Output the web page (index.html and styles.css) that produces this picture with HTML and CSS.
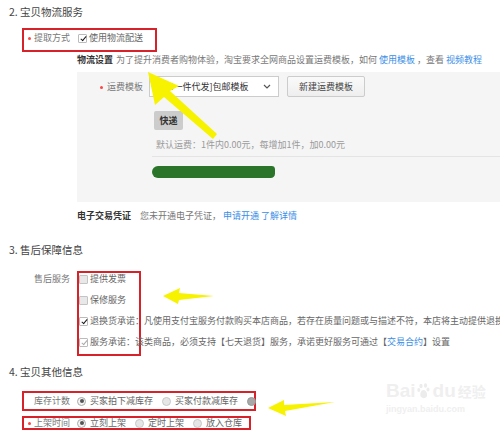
FILE: index.html
```html
<!DOCTYPE html>
<html lang="zh-CN">
    <head>
        <meta charset="utf-8">
        <meta name="viewport" content="width=device-width, initial-scale=1">
        <title>宝贝信息</title>
        <link rel="stylesheet" href="styles.css">
    </head>
    <body>
        <div class="page">
            <h2 class="sec-title">2. 宝贝物流服务</h2>
            <div class="field mark pick">
                <span class="field-label"><i class="req"></i>提取方式</span>
                <span class="opt"><span class="cb on"></span>使用物流配送</span>
            </div>
            <div class="logistics">
                <p class="tip"><b class="tip-title">物流设置</b>为了提升消费者购物体验，淘宝要求全网商品设置运费模板，如何 <a>使用模板</a> ，查看 <a>视频教程</a></p>
                <div class="panel">
                    <div class="tpl-row">
                        <span class="tpl-label"><i class="req"></i>运费模板</span>
                        <span class="select">[¥9.8一件代发]包邮模板
                            <svg class="chev" width="8" height="5" viewBox="0 0 8 5"><path d="M1 1 L4 4 L7 1" fill="none" stroke="#555" stroke-width="1.2"/></svg>
                        </span>
                        <span class="btn">新建运费模板</span>
                    </div>
                    <div class="tpl-detail">
                        <span class="tag">快递</span>
                        <p class="fee">默认运费：1件内0.00元，每增加1件，加0.00元</p>
                        <div class="scribble"></div>
                    </div>
                </div>
                <p class="tip"><b class="tip-title wide">电子交易凭证</b>您未开通电子凭证， <a>申请开通</a> <a>了解详情</a></p>
            </div>

            <h2 class="sec-title after">3. 售后保障信息</h2>
            <div class="field svc">
                <span class="field-label">售后服务</span>
                <div class="svc-list">
                    <div class="svc-item"><span class="cb"></span>提供发票</div>
                    <div class="svc-item"><span class="cb"></span>保修服务</div>
                    <div class="svc-item"><span class="cb on"></span>退换货承诺：凡使用支付宝服务付款购买本店商品，若存在质量问题或与描述不符，本店将主动提供退换</div>
                    <div class="svc-item"><span class="cb on off"></span>服务承诺：该类商品，必须支持【七天退货】服务，承诺更好服务可通过【<a>交易合约</a>】设置</div>
                </div>
            </div>

            <h2 class="sec-title other">4. 宝贝其他信息</h2>
            <div class="field mark stock">
                <span class="field-label">库存计数</span>
                <span class="opt"><span class="rd on"></span>买家拍下减库存</span>
                <span class="opt"><span class="rd"></span>买家付款减库存</span>
                <span class="opt"><span class="rd dim"></span></span>
            </div>
            <div class="field mark listing">
                <span class="field-label"><i class="req"></i>上架时间</span>
                <span class="opt"><span class="rd on"></span>立刻上架</span>
                <span class="opt"><span class="rd"></span>定时上架</span>
                <span class="opt"><span class="rd"></span>放入仓库</span>
            </div>

            <div class="watermark">
                <span class="wm-logo">Bai<svg class="paw" width="15" height="16" viewBox="0 0 15 16"><g fill="#ececec"><ellipse cx="4" cy="3" rx="1.6" ry="2.2"/><ellipse cx="8.5" cy="2.5" rx="1.6" ry="2.2"/><ellipse cx="1.8" cy="7" rx="1.5" ry="2"/><ellipse cx="11" cy="6.5" rx="1.5" ry="2"/><path d="M6.5 7 C3.5 7 2.5 12 4 14 C5.5 15.5 8 15.5 9.5 14 C11 12 9.5 7 6.5 7 Z"/></g></svg>du<span class="wm-cn">经验</span></span>
                <span class="wm-url">jingyan.baidu.com</span>
            </div>

            <!-- yellow annotation arrows -->
            <svg class="marks" width="500" height="436" viewBox="0 0 500 436">
                <g fill="#f7f200">
                    <polygon points="148,72 179,86 170,91 217,134 213,139 164,97 155,105"/>
                    <polygon points="163,296 180,288 179,293 214,296 179,300 178,304"/>
                    <polygon points="268,408 284,400 284,405 335,402 285,411 286,416"/>
                </g>
            </svg>
        </div>
    </body>
</html>
```

FILE: styles.css
```css
body, html {
    padding: 0;
    margin: 0;
    background: #fff;
}
* {
    box-sizing: border-box;
}
p {
    margin: 0;
}
a {
    color: #3a8ee6;
}
.page {
    position: relative;
    width: 500px;
    height: 436px;
    overflow: hidden;
    padding-left: 9px;
    font-family: "Noto Sans CJK SC", "Noto Sans", sans-serif;
    font-size: 9px;
    color: #777;
    white-space: nowrap;
}
.sec-title {
    margin: 3px 0 0;
    font-size: 10.5px;
    font-weight: normal;
    line-height: 18px;
    color: #444;
}
.sec-title.after {
    margin-top: 18px;
}
.sec-title.other {
    margin-top: 5px;
}

/* form rows */
.field {
    display: flex;
    align-items: center;
    margin-left: 13px;
    border: 2px solid transparent;
}
.field.mark {
    border-color: #d8222a;
}
.field-label {
    width: 46px;
    flex: none;
    text-align: right;
    margin-right: 7px;
    color: #777;
}
.req {
    display: inline-block;
    width: 3px;
    height: 3px;
    border-radius: 50%;
    background: #f44;
    vertical-align: middle;
    margin-right: 3px;
}
.opt {
    display: inline-flex;
    align-items: center;
    color: #666;
    margin-right: 9px;
}
.pick {
    width: 135px;
    margin-top: 7px;
    padding: 1px 0 5px;
    line-height: 14px;
}
.pick .field-label {
    margin-right: 8px;
}

/* checkbox & radio */
.cb {
    position: relative;
    display: inline-block;
    width: 9px;
    height: 9px;
    border: 1px solid #c4c4c4;
    border-radius: 1px;
    background: #e8e8e8;
    margin-right: 2px;
    flex: none;
}
.cb.on {
    background: #fff;
    border-color: #bbb;
}
.cb.on::after {
    content: "";
    position: absolute;
    left: 2.5px;
    top: 0;
    width: 2px;
    height: 5px;
    border: solid #1a1a1a;
    border-width: 0 1.6px 1.6px 0;
    transform: rotate(40deg);
}
.cb.off::after {
    border-color: #aaa;
}
.rd {
    position: relative;
    display: inline-block;
    width: 9px;
    height: 9px;
    border-radius: 50%;
    border: 1px solid #c8c8c8;
    background: #e6e6e6;
    margin-right: 4px;
    flex: none;
}
.rd.on {
    background: #f3f3f3;
    border-color: #aaa;
}
.rd.on::after {
    content: "";
    position: absolute;
    left: 1.5px;
    top: 1.5px;
    width: 4px;
    height: 4px;
    border-radius: 50%;
    background: #555;
}
.rd.dim {
    background: #a8a8a8;
    border-color: #999;
}

/* logistics */
.logistics {
    margin-left: 68px;
}
.tip {
    margin-top: 1px;
    line-height: 14px;
}
.tip + .panel + .tip {
    margin-top: 7px;
}
.tip-title {
    color: #333;
    margin-right: 3px;
}
.tip-title.wide {
    margin-right: 9px;
}
.panel {
    margin-top: 5px;
    padding: 4px 0 24px;
    background: #f5f5f5;
}
.tpl-row {
    display: flex;
    align-items: center;
    height: 21px;
    padding-left: 23px;
}
.tpl-label {
    margin-right: 6px;
}
.tpl-label .req {
    margin-right: 4px;
}
.select {
    display: flex;
    align-items: center;
    justify-content: space-between;
    width: 130px;
    height: 21px;
    padding: 0 7px 0 3px;
    border: 1px solid #ccc;
    background: #fff;
    color: #333;
}
.btn {
    display: flex;
    align-items: center;
    justify-content: center;
    width: 78px;
    height: 21px;
    margin-left: 8px;
    border: 1px solid #ccc;
    border-radius: 2px;
    background: linear-gradient(#fafafa, #eee);
    color: #444;
}
.tpl-detail {
    margin: 14px 0 0 75px;
}
.tag {
    display: flex;
    align-items: center;
    justify-content: center;
    width: 29px;
    height: 19px;
    margin-left: 2px;
    border-radius: 2px;
    background: #ccc;
    color: #333;
    font-weight: bold;
}
.fee {
    margin-top: 8px;
    padding: 0 0 4px 4px;
    line-height: 14px;
    border-bottom: 1px solid #e4e4e4;
    color: #9a9a9a;
}
.scribble {
    width: 123px;
    height: 12px;
    margin-top: 9px;
    border-radius: 7px 4px 5px 7px;
    background: #2a752a;
}

/* after-sale */
.svc {
    align-items: flex-start;
    margin-top: 10px;
}
.svc .field-label {
    line-height: 12px;
    padding-top: 2px;
    margin-right: 7px;
}
.svc-list {
    display: flex;
    flex-direction: column;
    gap: 9px;
    width: 64px;
    padding-bottom: 6px;
    border: 2px solid #d8222a;
}
.svc-item {
    display: flex;
    align-items: center;
    height: 12px;
    line-height: 12px;
    color: #666;
}

/* other info */
.stock {
    width: 234px;
    margin-top: 10px;
    line-height: 16px;
}
.listing {
    width: 229px;
    margin-top: 5px;
    line-height: 10px;
}

/* watermark */
.watermark {
    position: absolute;
    left: 386px;
    top: 380px;
    display: flex;
    flex-direction: column;
    color: #efefef;
}
.wm-logo {
    display: flex;
    align-items: flex-end;
    font-family: "Liberation Sans", sans-serif;
    font-weight: bold;
    font-size: 19px;
    line-height: 22px;
}
.paw {
    margin: 0 1px 3px;
}
.wm-cn {
    font-family: "Noto Sans CJK SC", sans-serif;
    font-size: 14px;
    margin-left: 2px;
}
.wm-url {
    font-family: "Liberation Sans", sans-serif;
    font-size: 9px;
    font-weight: bold;
    margin-top: 2px;
}
.marks {
    position: absolute;
    left: 0;
    top: 0;
    pointer-events: none;
}
```
